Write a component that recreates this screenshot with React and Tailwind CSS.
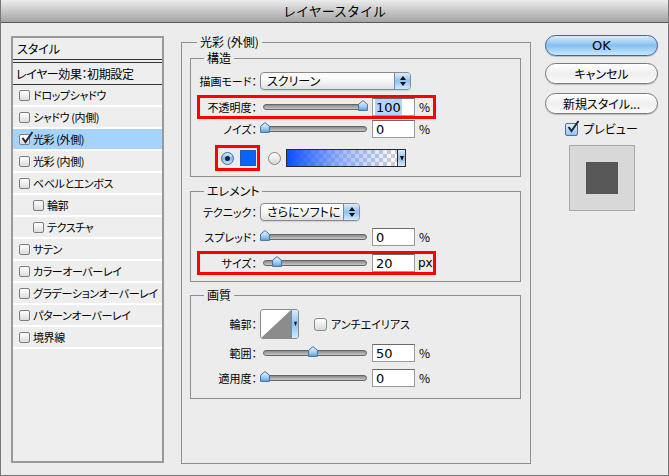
import React from "react";

const jp = "font-['Noto_Sans_CJK_JP',sans-serif] [font-feature-settings:'palt']";
const num = "font-['DejaVu_Sans',sans-serif]";

function Check({ checked, blue }) {
  const box = blue
    ? "w-[13px] h-[13px] border-[#4d6f98] from-[#e4f1fd] to-[#8fc3f1]"
    : "w-[11px] h-[11px] border-[#7d7d7d] from-white to-[#dcdcdc]";
  return (
    <span className={`relative inline-block shrink-0 rounded-[2px] border bg-gradient-to-b ${box}`}>
      {checked && (
        <svg viewBox="0 0 14 14" className="absolute -top-[4px] left-[0px] w-[14px] h-[14px]">
          <path d="M2.5 7 L5.5 11 L12.5 1" fill="none" stroke="#1c2a48" strokeWidth="2" />
        </svg>
      )}
    </span>
  );
}

function Thumb() {
  return (
    <svg viewBox="0 0 10 11" className="w-[10px] h-[11px]">
      <defs>
        <linearGradient id="thumbg" x1="0" y1="0" x2="0" y2="1">
          <stop offset="0" stopColor="#eef7ff" />
          <stop offset="0.6" stopColor="#9fcdf5" />
          <stop offset="1" stopColor="#5c9fe0" />
        </linearGradient>
      </defs>
      <path d="M5 0.6 L9.4 4.2 V10.4 H0.6 V4.2 Z" fill="url(#thumbg)" stroke="#45729f" strokeWidth="1" strokeLinejoin="round" />
    </svg>
  );
}

function Slider({ pos }) {
  return (
    <div className="relative ml-[3px] w-[104px] h-[6px] rounded-full border border-[#666] bg-gradient-to-b from-[#8a8a8a] to-[#c8c8c8]">
      <div className="absolute -top-[5px]" style={{ left: `${pos * 98 - 4}px` }}>
        <Thumb />
      </div>
    </div>
  );
}

function Num({ v, sel }) {
  return (
    <div className={`ml-[5px] w-[43px] h-[18px] border border-[#9a9a9a] border-t-[#6a6a6a] bg-white flex items-stretch pl-[2px] text-[13px] leading-none ${num}`}>
      <span className={`flex items-center px-[1px] ${sel ? "bg-[#b3d4fc]" : ""}`}>{v}</span>
    </div>
  );
}

function Row({ label, hl, className = "", children }) {
  return (
    <div
      className={`flex items-center h-[18px] ml-[9px] w-[233px] ${
        hl ? "outline-solid outline-[3px] outline-[#ff0000]" : ""
      } ${className}`}
    >
      <div className="w-[57px] flex justify-end whitespace-nowrap text-[11px]">{label}</div>
      <div className="ml-[3px] flex items-center">{children}</div>
    </div>
  );
}

function Stepper() {
  return (
    <div className="w-[16px] border-l border-[#6e8bb0] bg-gradient-to-b from-[#dcecfc] via-[#8fc1ef] to-[#d2eafe] flex flex-col items-center justify-center gap-[2px]">
      <svg viewBox="0 0 6 4" className="w-[6px] h-[4px]"><path d="M3 0 L6 4 H0 Z" fill="#111" /></svg>
      <svg viewBox="0 0 6 4" className="w-[6px] h-[4px]"><path d="M0 0 H6 L3 4 Z" fill="#111" /></svg>
    </div>
  );
}

function Select({ text, w }) {
  return (
    <div className={`flex h-[18px] ${w} rounded-[4px] border border-[#8a8a8a] bg-gradient-to-b from-white via-[#f6f6f6] to-[#e0e0e0] shadow-[0_1px_1px_rgba(0,0,0,0.12)] overflow-hidden`}>
      <div className="flex-1 flex items-center pl-[6px] text-[12px]">{text}</div>
      <Stepper />
    </div>
  );
}

function Radio({ on }) {
  return on ? (
    <span className="block w-[13px] h-[13px] rounded-full border border-[#3f6a98] bg-gradient-to-b from-[#d8ecfd] via-[#7fb9ee] to-[#c9e6ff] flex items-center justify-center">
      <span className="block w-[5px] h-[5px] rounded-full bg-[#17233a]" />
    </span>
  ) : (
    <span className="block w-[13px] h-[13px] rounded-full border border-[#858585] bg-gradient-to-b from-white to-[#d9d9d9]" />
  );
}

function Group({ title, className = "", children }) {
  return (
    <fieldset className={`border border-[#8f8f8f] ${className}`}>
      <legend className="ml-[13px] px-[3px] leading-[14px] text-[12px]">{title}</legend>
      {children}
    </fieldset>
  );
}

const styles = [
  { t: "ドロップシャドウ" },
  { t: "シャドウ (内側)" },
  { t: "光彩 (外側)", on: true },
  { t: "光彩 (内側)" },
  { t: "ベベルとエンボス" },
  { t: "輪郭", sub: true },
  { t: "テクスチャ", sub: true },
  { t: "サテン" },
  { t: "カラーオーバーレイ" },
  { t: "グラデーションオーバーレイ" },
  { t: "パターンオーバーレイ" },
  { t: "境界線" },
];

function StyleList() {
  return (
    <div className="ml-[10px] mt-[13px] w-[153px] h-[427px] border-2 border-[#999] bg-[#eeeeee] text-[11px]">
      <div className="h-[22px] flex items-center pl-[4px] border-b border-[#333] text-[12px]">スタイル</div>
      <div className="h-[2px]" />
      <div className="h-[23px] flex items-center pl-[3px] border-y border-[#333] text-[12px] tracking-[-0.4px]">レイヤー効果：初期設定</div>
      {styles.map((s) => (
        <div
          key={s.t}
          className={`h-[22px] flex items-center gap-[3px] border-b-2 border-white ${s.sub ? "pl-[20px]" : "pl-[6px]"} ${
            s.on ? "bg-[#a5d3fb]" : ""
          }`}
        >
          <Check checked={s.on} />
          <span className="whitespace-nowrap tracking-[-0.4px]">{s.t}</span>
        </div>
      ))}
    </div>
  );
}

function Middle() {
  return (
    <fieldset className="ml-[17px] mt-[12px] w-[350px] h-[429px] border border-[#8f8f8f]">
      <legend className="ml-[15px] px-[3px] leading-[14px] text-[12px]">光彩 (外側)</legend>
      <div className="pt-[2px] pl-[8px]">
        {/* 構造 */}
        <Group title="構造" className="w-[331px] pb-[8px]">
          <Row label="描画モード：" className="mt-[7px]">
            <Select text="スクリーン" w="w-[151px]" />
          </Row>
          <Row label="不透明度：" hl className="mt-[8px]">
            <Slider pos={1} />
            <Num v="100" sel />
            <span className="ml-[4px] text-[12px]">%</span>
          </Row>
          <Row label="ノイズ：" className="mt-[4px]">
            <Slider pos={0} />
            <Num v="0" />
            <span className="ml-[4px] text-[12px]">%</span>
          </Row>
          <div className="mt-[10px] flex items-center h-[20px]">
            <div className="ml-[27px] w-[39px] h-[20px] flex items-center pl-[3px] gap-[6px] outline-solid outline-[3px] outline-[#ff0000]">
              <Radio on />
              <span className="block w-[16px] h-[16px] bg-[#0a63ff] border border-[#2a57a8]" />
            </div>
            <div className="ml-[11px]">
              <Radio />
            </div>
            <div className="ml-[5px] w-[120px] h-[18px] flex border border-[#2a2a2a]">
              <div className="flex-1 bg-[repeating-conic-gradient(#cfcfcf_0_25%,#ffffff_0_50%)] bg-[length:8px_8px]">
                <div className="h-full bg-gradient-to-r from-[#0b4dff] via-[#5f8dff]/60 to-transparent" />
              </div>
              <div className="w-[8px] border-l border-[#2a2a2a] bg-gradient-to-b from-[#d8ebfd] via-[#8fc1ef] to-[#d2eafe] flex items-center justify-center">
                <svg viewBox="0 0 4 5" className="w-[4px] h-[5px]"><path d="M0 0 H4 L2 5 Z" fill="#111" /></svg>
              </div>
            </div>
          </div>
        </Group>

        {/* エレメント */}
        <Group title="エレメント" className="mt-[7px] w-[331px] pb-[9px]">
          <Row label="テクニック：" className="mt-[5px]">
            <Select text="さらにソフトに" w="w-[100px]" />
          </Row>
          <Row label="スプレッド：" className="mt-[7px]">
            <Slider pos={0} />
            <Num v="0" />
            <span className="ml-[4px] text-[12px]">%</span>
          </Row>
          <Row label="サイズ：" hl className="mt-[8px]">
            <Slider pos={0.12} />
            <Num v="20" />
            <span className={`ml-[3px] text-[12px] ${num}`}>px</span>
          </Row>
        </Group>

        {/* 画質 */}
        <Group title="画質" className="mt-[6px] w-[331px] pb-[11px]">
          <div className="mt-[7px] ml-[9px] flex items-center h-[30px]">
            <div className="w-[57px] flex justify-end text-[11px]">輪郭：</div>
            <div className="ml-[3px] w-[39px] h-[30px] flex rounded-[3px] border border-[#8a8a8a] bg-white overflow-hidden">
              <svg viewBox="0 0 31 28" preserveAspectRatio="none" className="flex-1 h-full">
                <path d="M0 28 L31 0 V28 Z" fill="#8c8c8c" />
              </svg>
              <div className="w-[7px] bg-gradient-to-b from-[#d8ebfd] via-[#8fc1ef] to-[#d2eafe] border-l border-[#6e8bb0] flex items-center justify-center">
                <svg viewBox="0 0 4 6" className="w-[3px] h-[6px]"><path d="M0 0 H4 L2 6 Z" fill="#111" /></svg>
              </div>
            </div>
            <div className="ml-[15px] flex items-center gap-[4px] text-[11px]">
              <span className="block w-[13px] h-[13px] rounded-[3px] border border-[#8a8a8a] bg-gradient-to-b from-white to-[#dadada]" />
              アンチエイリアス
            </div>
          </div>
          <Row label="範囲：" className="mt-[5px]">
            <Slider pos={0.49} />
            <Num v="50" />
            <span className="ml-[4px] text-[12px]">%</span>
          </Row>
          <Row label="適用度：" className="mt-[7px]">
            <Slider pos={0} />
            <Num v="0" />
            <span className="ml-[4px] text-[12px]">%</span>
          </Row>
        </Group>
      </div>
    </fieldset>
  );
}

function Buttons() {
  const plain =
    "h-[21px] rounded-full border border-[#7b7b7b] bg-gradient-to-b from-white via-[#efefef] to-[#fafafa] shadow-[0_1px_1px_rgba(0,0,0,0.2)] flex items-center justify-center text-[12px]";
  return (
    <div className="ml-[14px] mt-[12px] w-[113px] flex flex-col">
      <div className="h-[21px] rounded-full border border-[#3c6699] bg-gradient-to-b from-[#d9ecfd] via-[#86c0f1] to-[#c9e8ff] shadow-[0_1px_1px_rgba(0,0,0,0.2)] flex items-center justify-center text-[13px]">
        <span className={num}>OK</span>
      </div>
      <div className={`mt-[7px] ${plain}`}>キャンセル</div>
      <div className={`mt-[9px] ${plain}`}>新規スタイル...</div>
      <div className="mt-[6px] flex items-center justify-center gap-[5px] text-[12px]">
        <Check checked blue />
        プレビュー
      </div>
      <div className="mt-[7px] self-center w-[66px] h-[66px] border border-[#a9a9a9] bg-[#d8d8d8] flex items-center justify-center">
        <div className="w-[32px] h-[32px] bg-[#575757]" />
      </div>
    </div>
  );
}

export default function App() {
  return (
    <div className={`w-[669px] h-[476px] overflow-hidden flex flex-col bg-[#ececec] border-x border-b border-[#777] text-black ${jp}`}>
      <div className="h-[23px] shrink-0 border-b border-[#585858] bg-gradient-to-b from-[#ececec] to-[#a4a4a4] flex items-center justify-center text-[13px] [font-feature-settings:normal]">
        レイヤースタイル
      </div>
      <div className="flex">
        <StyleList />
        <Middle />
        <Buttons />
      </div>
    </div>
  );
}
